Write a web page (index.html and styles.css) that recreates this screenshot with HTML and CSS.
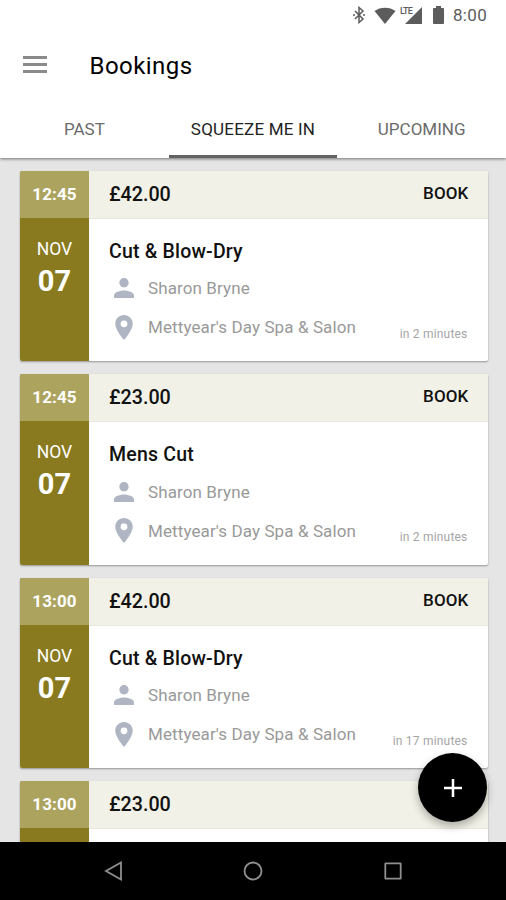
FILE: index.html
```html
<!DOCTYPE html>
<html lang="en">
<head>
  <meta charset="UTF-8">
  <meta name="viewport" content="width=device-width, initial-scale=1.0">
  <title>Bookings</title>
  <link rel="stylesheet" href="styles.css">
</head>
<body>
  <svg class="defs" width="0" height="0">
    <symbol id="icon-person" viewBox="4 4 16 16">
      <path d="M12 11.500c2.100 0 3.700-1.700 3.700-3.750S14.100 4 12 4 8.300 5.700 8.300 7.750s1.600 3.750 3.700 3.750zm0 2.500c-2.670 0-8 1.200-8 3.900V20h16v-2.100c0-2.700-5.330-3.900-8-3.900z"/>
    </symbol>
    <symbol id="icon-place" viewBox="5 2 14 20">
      <path d="M12 2C8.130 2 5 5.130 5 9c0 5.250 7 13 7 13s7-7.750 7-13c0-3.870-3.130-7-7-7zm0 9.700a2.700 2.700 0 1 1 0-5.400 2.700 2.700 0 0 1 0 5.400z"/>
    </symbol>
  </svg>

  <header>
    <div class="status">
      <svg class="bluetooth" width="12" height="18" viewBox="0 0 12 18">
        <path d="M2 5l8 8-4 3.500v-15L10 5l-8 8"/>
        <circle cx="1" cy="9" r="1"/>
        <circle cx="11" cy="9" r="1"/>
      </svg>
      <svg class="wifi" width="22" height="17" viewBox="0 0 22 17">
        <path d="M11 17L.5 4C6-.5 16-.5 21.500 4z"/>
      </svg>
      <span class="lte">LTE</span>
      <svg class="signal" width="17" height="17" viewBox="0 0 17 17">
        <path d="M0 17L17 0v17z"/>
      </svg>
      <svg class="battery" width="11" height="18" viewBox="0 0 11 18">
        <path d="M3 0h5v2h2q1 0 1 1v14q0 1-1 1H1q-1 0-1-1V3q0-1 1-1h2z"/>
      </svg>
      <span class="clock">8:00</span>
    </div>
    <div class="toolbar">
      <div class="hamburger"><i></i><i></i><i></i></div>
      <h1>Bookings</h1>
    </div>
    <nav class="tabs">
      <a class="tab">PAST</a>
      <a class="tab active">SQUEEZE ME IN</a>
      <a class="tab">UPCOMING</a>
    </nav>
  </header>

  <main class="list">
    <div class="card">
      <div class="side">
        <div class="time">12:45</div>
        <div class="month">NOV</div>
        <div class="day">07</div>
      </div>
      <div class="content">
        <div class="top"><span class="price">£42.00</span><span class="book">BOOK</span></div>
        <div class="details">
          <h2>Cut &amp; Blow-Dry</h2>
          <div class="row"><svg class="person"><use href="#icon-person"/></svg><span>Sharon Bryne</span></div>
          <div class="row"><svg class="place"><use href="#icon-place"/></svg><span>Mettyear's Day Spa &amp; Salon</span><small>in 2 minutes</small></div>
        </div>
      </div>
    </div>

    <div class="card">
      <div class="side">
        <div class="time">12:45</div>
        <div class="month">NOV</div>
        <div class="day">07</div>
      </div>
      <div class="content">
        <div class="top"><span class="price">£23.00</span><span class="book">BOOK</span></div>
        <div class="details">
          <h2>Mens Cut</h2>
          <div class="row"><svg class="person"><use href="#icon-person"/></svg><span>Sharon Bryne</span></div>
          <div class="row"><svg class="place"><use href="#icon-place"/></svg><span>Mettyear's Day Spa &amp; Salon</span><small>in 2 minutes</small></div>
        </div>
      </div>
    </div>

    <div class="card">
      <div class="side">
        <div class="time">13:00</div>
        <div class="month">NOV</div>
        <div class="day">07</div>
      </div>
      <div class="content">
        <div class="top"><span class="price">£42.00</span><span class="book">BOOK</span></div>
        <div class="details">
          <h2>Cut &amp; Blow-Dry</h2>
          <div class="row"><svg class="person"><use href="#icon-person"/></svg><span>Sharon Bryne</span></div>
          <div class="row"><svg class="place"><use href="#icon-place"/></svg><span>Mettyear's Day Spa &amp; Salon</span><small>in 17 minutes</small></div>
        </div>
      </div>
    </div>

    <!-- cut off by the navigation bar -->
    <div class="card">
      <div class="side">
        <div class="time">13:00</div>
      </div>
      <div class="content">
        <div class="top"><span class="price">£23.00</span></div>
      </div>
    </div>
  </main>

  <button class="fab" aria-label="Add booking">
    <svg width="18" height="18" viewBox="0 0 18 18"><path d="M9 0v18M0 9h18"/></svg>
  </button>

  <footer class="navbar">
    <svg width="20" height="20" viewBox="0 0 20 20"><path d="M18 1.500v17L3 10z"/></svg>
    <svg width="20" height="20" viewBox="0 0 20 20"><circle cx="10" cy="10" r="8.500"/></svg>
    <svg width="20" height="20" viewBox="0 0 20 20"><rect x="2.300" y="2.300" width="15.400" height="15.400" rx="0.500"/></svg>
  </footer>
</body>
</html>
```
FILE: styles.css
```css
* {
  box-sizing: border-box;
}
body {
  font-family: Roboto, sans-serif;
  background-color: #e5e5e5;
  color: #111;
  margin: 0;
  height: 900px;
  display: flex;
  flex-direction: column;
  overflow: hidden;
}
h1, h2 {
  margin: 0;
  font-weight: 500;
}
.defs {
  position: absolute;
}
header {
  background-color: white;
  height: 158px;
  flex: none;
  box-shadow: 0 1px 3px rgba(0, 0, 0, 0.5);
  z-index: 1;
}
.status {
  height: 30px;
  display: flex;
  justify-content: flex-end;
  align-items: center;
  padding-right: 19px;
  color: #5c5c5c;
}
.status svg {
  fill: #5c5c5c;
}
.status .bluetooth path {
  fill: none;
  stroke: #5c5c5c;
  stroke-width: 1.5;
}
.wifi {
  margin-left: 9px;
}
.lte {
  font-size: 9px;
  font-weight: 500;
  line-height: 10px;
  letter-spacing: -0.8px;
  margin: -8px -7px 0 4px;
}
.battery {
  margin: 0 9px 0 11px;
}
.clock {
  font-size: 17px;
  letter-spacing: 0.3px;
}
.toolbar {
  height: 70px;
  display: flex;
  align-items: center;
  padding-left: 23px;
}
.hamburger {
  width: 23.5px;
  height: 17px;
  margin-top: -2px;
  display: flex;
  flex-direction: column;
  justify-content: space-between;
}
.hamburger i {
  height: 3px;
  background-color: #8a8a8a;
}
h1 {
  font-size: 24px;
  font-weight: 400;
  letter-spacing: 0.45px;
  margin-left: 43px;
  padding-top: 2px;
  color: #000;
}
.tabs {
  display: flex;
  height: 58px;
}
.tab {
  flex: 1;
  text-align: center;
  font-size: 17px;
  line-height: 58px;
  color: #6b6b6b;
}
.tab.active {
  color: #222;
  letter-spacing: 0.2px;
  border-bottom: 3px solid #626262;
}
.list {
  flex: 1;
  min-height: 0;
  overflow: hidden;
  padding: 12.5px 18.5px 0 20px;
}
.card {
  display: flex;
  height: 190.5px;
  margin-bottom: 13px;
  background-color: white;
  border-radius: 2px;
  overflow: hidden;
  box-shadow: 0 1px 2px rgba(0, 0, 0, 0.35);
}
.side {
  width: 69px;
  background-color: #897a1f;
  color: white;
  text-align: center;
}
.time {
  height: 47px;
  line-height: 47px;
  background-color: #aca35f;
  font-size: 17px;
  font-weight: 700;
  letter-spacing: 0.1px;
}
.month {
  margin-top: 19px;
  font-size: 17.5px;
  line-height: 24px;
}
.day {
  font-size: 29px;
  font-weight: 700;
  line-height: 40px;
}
.content {
  flex: 1;
}
.top {
  display: flex;
  justify-content: space-between;
  height: 48px;
  padding: 0 19px 0 20px;
  background-color: #f1f1e7;
  border-bottom: 1px solid #e8e8df;
  line-height: 48px;
  font-weight: 500;
}
.price {
  font-size: 19.7px;
}
.book {
  font-size: 17px;
  line-height: 44px;
  letter-spacing: 0.15px;
}
.details {
  padding: 20px 20px 0;
}
h2 {
  font-size: 19.5px;
  line-height: 26px;
  letter-spacing: 0.2px;
}
.row {
  display: flex;
  align-items: center;
  height: 40px;
  font-size: 17px;
  letter-spacing: 0.1px;
  color: #999;
}
h2 + .row {
  height: 38px;
  margin-top: 4.5px;
}
.row svg {
  fill: #afb5c2;
  flex: none;
}
.person {
  width: 20px;
  height: 20px;
  margin: 0 14px 0 5px;
}
.place {
  width: 18px;
  height: 25px;
  margin: 0 15px 0 6px;
}
small {
  margin: 13px 0 0 auto;
  font-size: 12px;
  letter-spacing: 0.2px;
  color: #a5a5a5;
}
.fab {
  position: absolute;
  left: 418px;
  top: 753px;
  width: 69px;
  height: 69px;
  border: none;
  border-radius: 50%;
  background-color: black;
  display: flex;
  align-items: center;
  justify-content: center;
  box-shadow: 0 4px 8px rgba(0, 0, 0, 0.3);
  z-index: 2;
}
.fab path {
  stroke: white;
  stroke-width: 2.5;
}
.navbar {
  flex: none;
  height: 58px;
  background-color: black;
  display: flex;
  justify-content: space-between;
  align-items: center;
  padding: 0 103px;
}
.navbar svg {
  fill: none;
  stroke: #8f8f8f;
  stroke-width: 1.8;
}
```
